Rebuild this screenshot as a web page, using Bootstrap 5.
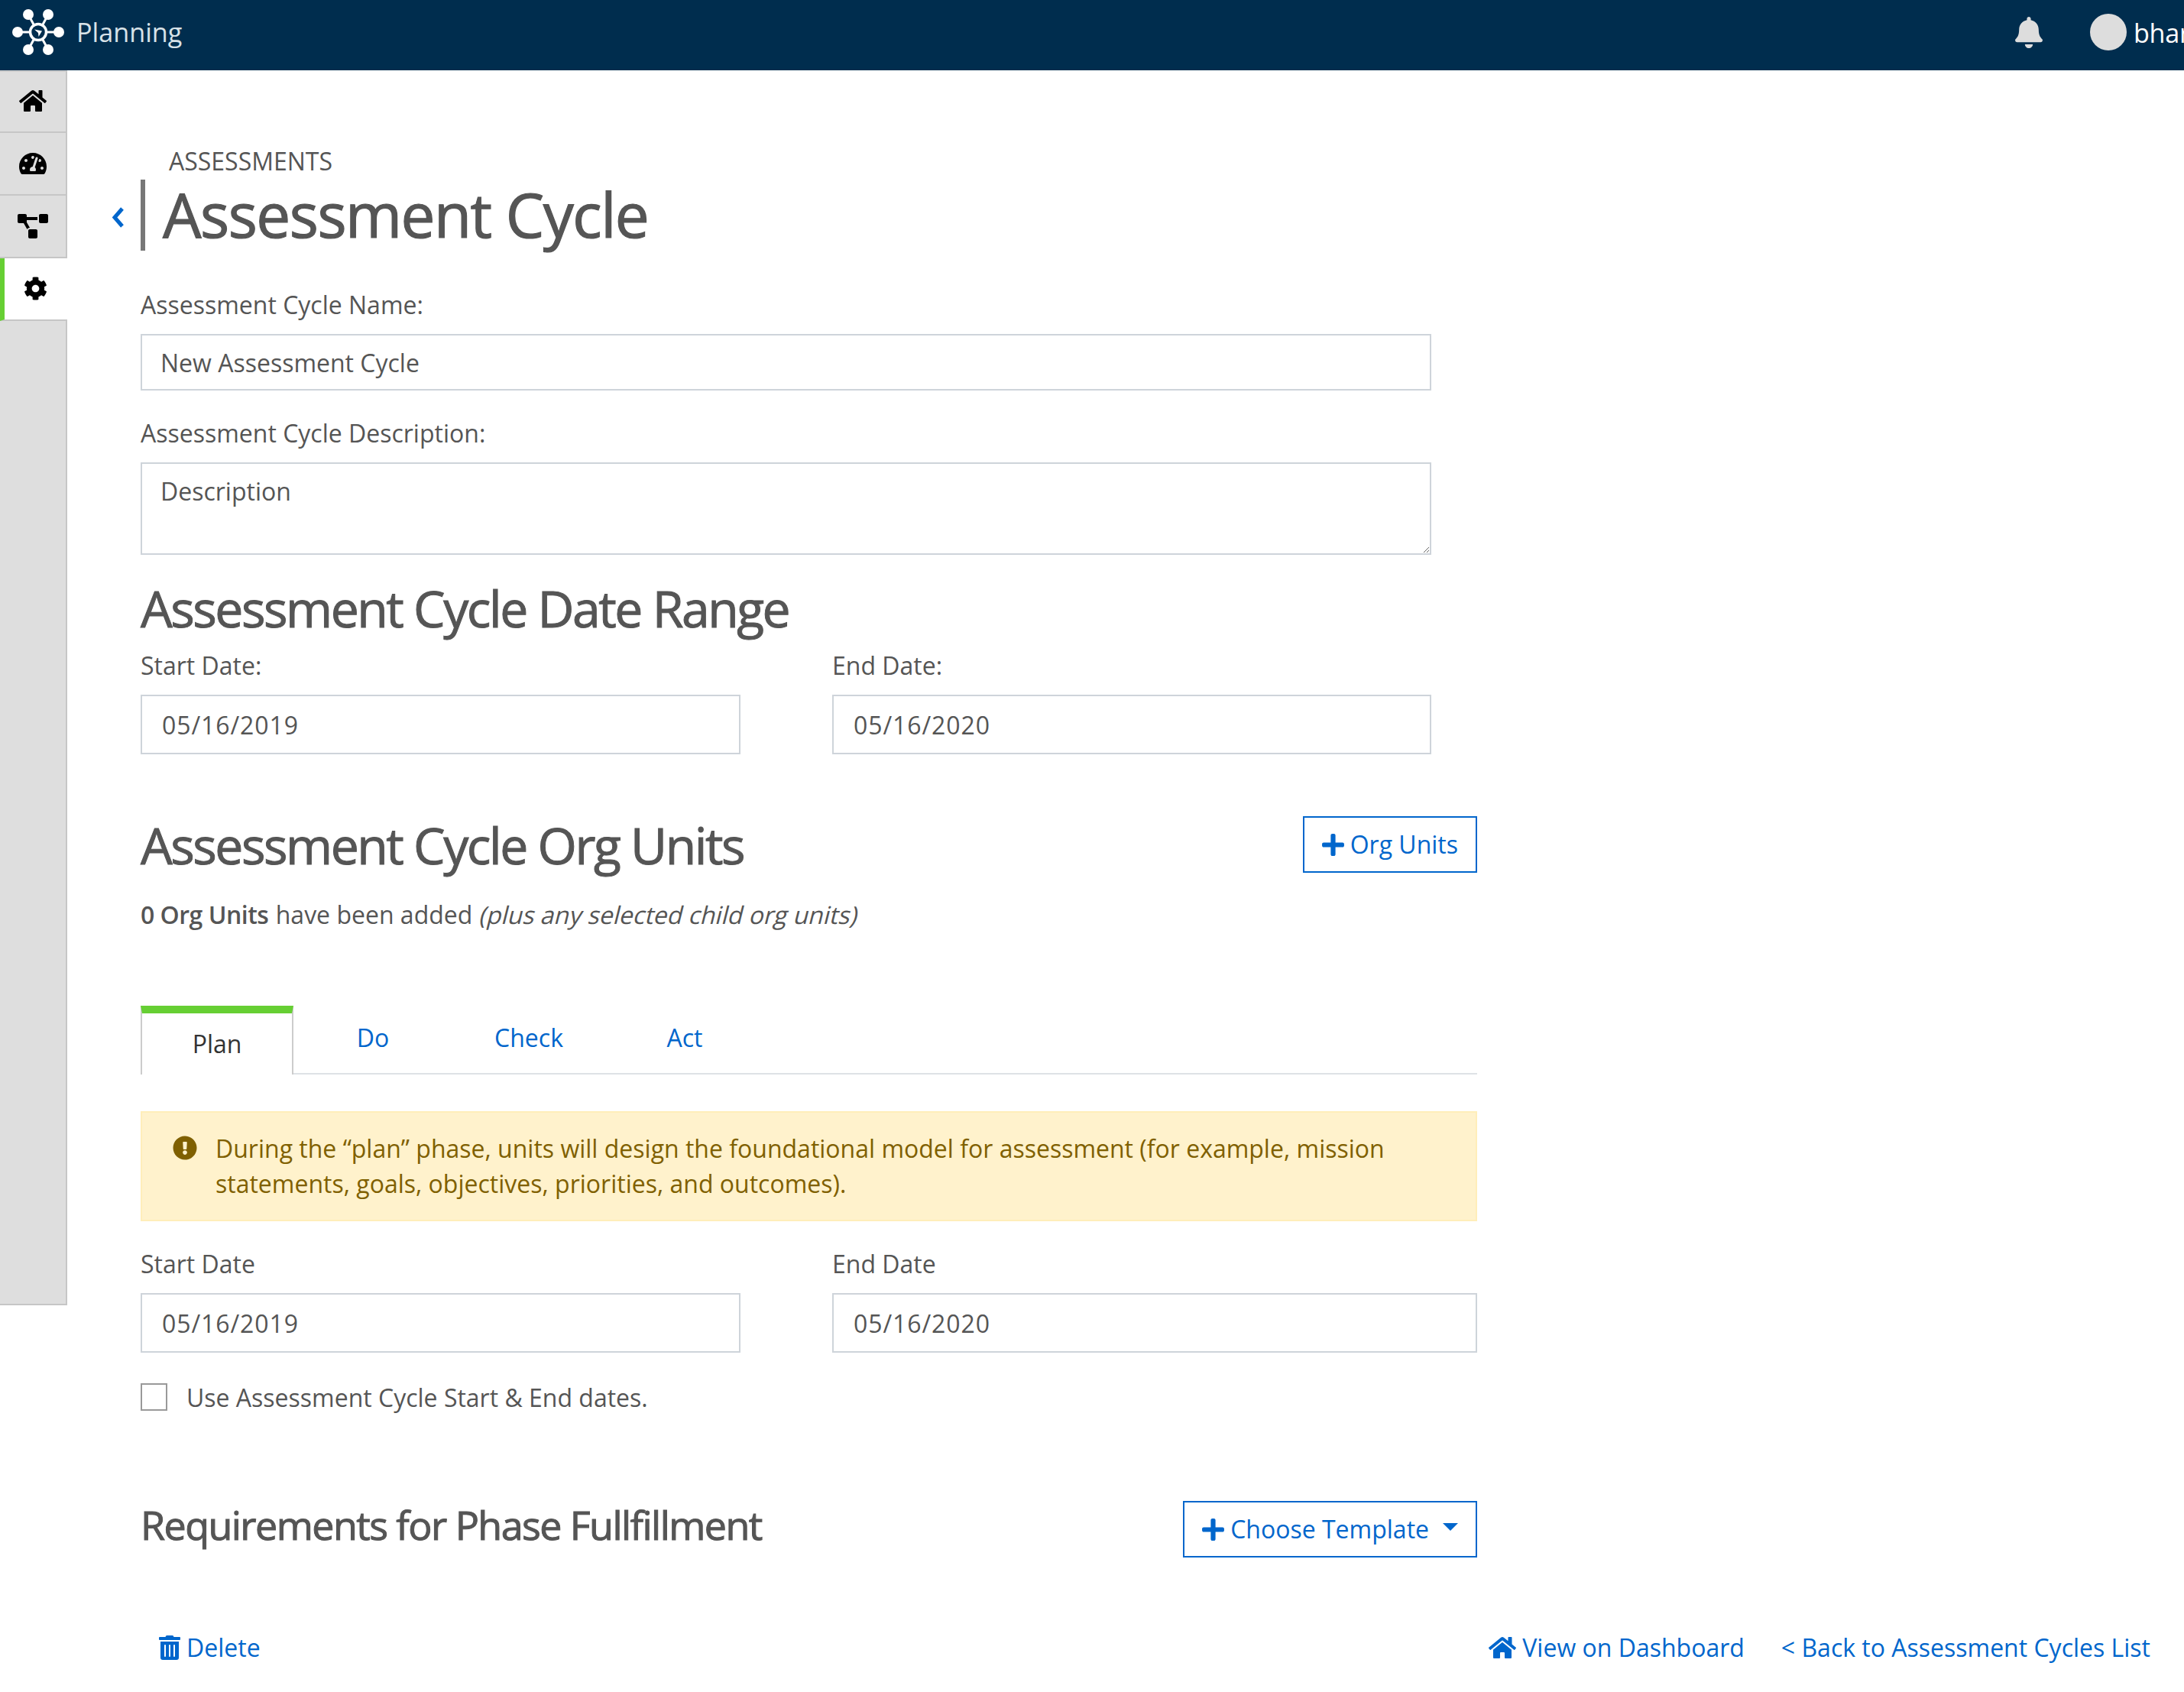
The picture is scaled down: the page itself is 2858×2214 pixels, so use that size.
<!DOCTYPE html>
<html lang="en">
<head>
<meta charset="utf-8">
<title>Assessment Cycle</title>
<link rel="stylesheet" href="https://cdn.jsdelivr.net/npm/bootstrap@5.3.0/dist/css/bootstrap.min.css">
<style>
html, body { height: 100%; overflow: hidden; }
body { font-family: "Open Sans", "Noto Sans", sans-serif; font-size: 32px; color: #555; background: #fff; line-height: 46px; }
svg { fill: currentColor; display: block; flex: none; }
.appbar { height: 92px; background: #002d4e; padding: 0; flex-wrap: nowrap; justify-content: flex-start; overflow: hidden; }
.appbar-logo { width: 72px; height: 72px; margin-left: 14px; margin-right: 14px; margin-top: -8px; }
.appbar-title { color: #d8e2e8; font-size: 34.2px; line-height: 46px; margin-top: -8px; }
.appbar-bell { width: 36px; height: 41px; color: #ddd; margin-left: auto; margin-top: -8px; }
.appbar-avatar { width: 48px; height: 48px; background: #ddd; border-radius: 50%; margin-left: 62px; margin-top: -8px; flex: none; }
.appbar-user { color: #fff; font-size: 34.2px; margin-left: 9px; width: 66px; overflow: hidden; flex: none; margin-top: -6px; white-space: nowrap; letter-spacing: -.3px; }
.rail { width: 88px; height: 1616px; flex: none; background: #dedede; border-right: 2px solid #c6c6c6; border-bottom: 2px solid #c6c6c6; border-top: 2px solid #ccc; }
.rail-item { height: 82px; display: flex; align-items: center; justify-content: center; color: #000; border-bottom: 2px solid #c6c6c6; }
.rail-item:first-child { height: 80px; }
.rail-item.is-on { background: #fff; margin-right: -2px; border-left: 6px solid #66cf33; padding-right: 2px; }
.rail-home svg, .rail-gauge svg { width: 36px; height: 32px; }
.rail-home svg { margin-top: -2px; }
.rail-flow svg { width: 40px; height: 32px; }
.rail-item.is-on svg { width: 31px; height: 31px; margin-top: -1px; }
.pane { width: 1749px; margin-left: 96px; flex: none; padding-top: 97px; }
.form-col { width: 1689px; }
.crumb { font-size: 32px; line-height: 44px; margin-left: 37px; height: 46px; }
.title-row { margin-left: -38px; height: 93px; }
.back-chev { width: 38px; color: #0066cc; }
.back-chev svg { width: 17px; height: 29px; fill: none; stroke: currentColor; stroke-width: 5; margin-top: 6px; }
.title-h { border-left: 6px solid #777; height: 93px; padding-left: 23px; margin: 0; font-size: 80px; font-weight: 400; line-height: 90px; letter-spacing: -1.5px; color: #555; white-space: nowrap; -webkit-text-stroke: 1.2px #555; }
.fld-label { font-size: 32px; line-height: 46px; margin: 0 0 15px; color: #555; display: block; }
.form-control.fld { border: 2px solid #ced4da; border-radius: 0; font-size: 32px; color: #555; padding: 0 24px; height: 74px; box-shadow: none; }
.form-control.fld.tall { height: 78px; padding-left: 26px; letter-spacing: .9px; }
textarea.form-control.fld { height: 121px; padding: 13px 24px; line-height: 46px; }
.sec-h { font-size: 66px; font-weight: 400; letter-spacing: -2.44px; line-height: 80px; margin: 0; color: #555; white-space: nowrap; -webkit-text-stroke: 1px #555; }
.sec-h.sm { font-size: 52px; letter-spacing: -1.56px; padding-bottom: 12px; }
.gap-col { column-gap: 120px; }
.gap-col > div:first-child { flex: 0 0 785px; }
.gap-col > div:last-child { flex: 1 1 0; min-width: 0; }
.btn.act-btn { border: 2px solid #0066cc; color: #0066cc; background: #fff; border-radius: 0; font-size: 32px; line-height: 46px; padding: 0 23px; height: 74px; display: flex; align-items: center; gap: 8px; }
.act-btn svg { width: 29px; height: 33px; }
.dropdown-toggle.act-btn::after { margin-left: 10px; border-top-width: 10px; border-left-width: 10px; border-right-width: 10px; margin-top: -6px; }
.tab-strip { border-bottom: 2px solid #dee2e6; height: 90px; flex-wrap: nowrap; }
.tab-strip .nav-link { border: 0; border-radius: 0; color: #0066cc; font-size: 32px; padding: 0; width: 204px; text-align: center; height: 84px; line-height: 84px; background: none; }
.tab-strip .nav-item:nth-child(2) { margin-left: 2px; }
.tab-strip .nav-link.active { width: 200px; height: 90px; margin-right: 0; color: #333; background: #fff; border-top: 10px solid #66cf33; border-left: 2px solid #ccc; border-right: 2px solid #ccc; line-height: 80px; }
.note { background: #fff2cc; border: 2px solid #ffeeba; border-radius: 0; color: #7f6000; font-size: 32px; line-height: 46px; padding: 24px 38px 24px 40px; margin: 0; display: flex; gap: 24px; height: 144px; }
.note svg { width: 32px; height: 32px; margin-top: 6px; }
.form-check-input.box { width: 35px; height: 36px; border: 2px solid #999; border-radius: 0; margin: -3px 0 0; flex: none; }
.chk-label { margin-left: 25px; }
.a-link { color: #0066cc; text-decoration: none; display: inline-flex; align-items: center; gap: 8px; white-space: nowrap; }
.a-link svg { height: 32px; }
.org-b { font-weight: 600; letter-spacing: -.5px; margin-right: 1px; }
.fake-oblique { display: inline-block; font-style: normal; transform: skewX(-14deg); margin-left: 2px; }
.bottom-row { width: 2630px; }
</style>
</head>
<body>
<nav class="navbar appbar">
  <svg class="appbar-logo" viewBox="0 0 72 72" aria-hidden="true">
    <g stroke="#fff" stroke-width="3" fill="none">
      <circle cx="36" cy="36" r="10.5" stroke-width="3.5"/>
      <path d="M9 36H25M47 36H63M23 13L30 26M49 13L42 26M23 59L30 46M49 59L42 46"/>
    </g>
    <g fill="#fff">
      <circle cx="9" cy="36" r="7"/><circle cx="63" cy="36" r="7"/>
      <circle cx="23" cy="13" r="7"/><circle cx="49" cy="13" r="7"/>
      <circle cx="23" cy="59" r="7"/><circle cx="49" cy="59" r="7"/>
      <path d="M31 32.5L41 34.5L36.5 42L36 37Z"/>
    </g>
  </svg>
  <span class="appbar-title">Planning</span>
  <svg class="appbar-bell" viewBox="0 0 448 512" aria-hidden="true"><path d="M224 512c35.32 0 63.97-28.65 63.97-64H160.03c0 35.35 28.65 64 63.97 64zm215.39-149.71c-19.32-20.76-55.47-51.99-55.47-154.29 0-77.7-54.48-139.9-127.94-155.16V32c0-17.67-14.32-32-31.98-32s-31.98 14.33-31.98 32v20.84C118.56 68.1 64.08 130.3 64.08 208c0 102.3-36.15 133.53-55.47 154.29-6 6.45-8.66 14.16-8.61 21.71.11 16.4 12.98 32 32.1 32h383.8c19.12 0 32-15.6 32.1-32 .05-7.55-2.61-15.27-8.61-21.71z"/></svg>
  <span class="appbar-avatar"></span>
  <span class="appbar-user">bharat</span>
</nav>
<div class="d-flex">
  <aside class="rail">
    <div class="rail-item rail-home"><svg viewBox="0 0 576 512" aria-hidden="true"><path d="M280.37 148.26L96 300.11V464a16 16 0 0 0 16 16l112.06-.29a16 16 0 0 0 15.92-16V368a16 16 0 0 1 16-16h64a16 16 0 0 1 16 16v95.64a16 16 0 0 0 16 16.05L464 480a16 16 0 0 0 16-16V300L295.67 148.26a12.19 12.19 0 0 0-15.3 0zM571.6 251.47L488 182.56V44.05a12 12 0 0 0-12-12h-56a12 12 0 0 0-12 12v72.61L318.47 43a48 48 0 0 0-61 0L4.34 251.47a12 12 0 0 0-1.6 16.9l25.5 31A12 12 0 0 0 45.15 301l235.22-193.74a12.19 12.19 0 0 1 15.3 0L530.9 301a12 12 0 0 0 16.9-1.6l25.5-31a12 12 0 0 0-1.7-16.93z"/></svg></div>
    <div class="rail-item rail-gauge"><svg viewBox="0 0 576 512" aria-hidden="true"><path d="M288 32C128.94 32 0 160.94 0 320c0 52.8 14.25 102.26 39.06 144.8 5.61 9.62 16.3 15.2 27.44 15.2h443c11.14 0 21.83-5.58 27.44-15.2C561.75 422.26 576 372.8 576 320c0-159.06-128.94-288-288-288zm0 64c14.71 0 26.58 10.13 30.32 23.65-1.11 2.26-2.64 4.23-3.45 6.67l-9.22 27.67c-5.13 3.49-10.97 6.01-17.64 6.01-17.67 0-32-14.33-32-32S270.33 96 288 96zM96 384c-17.67 0-32-14.33-32-32s14.33-32 32-32 32 14.33 32 32-14.33 32-32 32zm48-160c-17.67 0-32-14.33-32-32s14.33-32 32-32 32 14.33 32 32-14.33 32-32 32zm246.77-72.41l-61.33 184C343.13 347.33 352 364.54 352 384c0 11.72-3.38 22.55-8.88 32H232.88c-5.5-9.45-8.88-20.28-8.88-32 0-33.94 26.5-61.43 59.9-63.59l61.34-184.01c4.17-12.56 17.73-19.45 30.36-15.17 12.57 4.19 19.35 17.79 15.17 30.36zm14.66 57.2l15.52-46.55c3.47-1.29 7.13-2.23 11.05-2.23 17.67 0 32 14.33 32 32s-14.33 32-32 32c-11.38-.01-20.89-6.28-26.57-15.22zM480 384c-17.67 0-32-14.33-32-32s14.33-32 32-32 32 14.33 32 32-14.33 32-32 32z"/></svg></div>
    <div class="rail-item rail-flow"><svg viewBox="0 0 640 512" aria-hidden="true"><path d="M384 320H256c-17.67 0-32 14.33-32 32v128c0 17.67 14.33 32 32 32h128c17.67 0 32-14.33 32-32V352c0-17.67-14.33-32-32-32zM192 32c0-17.67-14.33-32-32-32H32C14.33 0 0 14.33 0 32v128c0 17.67 14.33 32 32 32h95.72l73.16 128.04C211.98 300.98 232.4 288 256 288h.28L192 175.51V128h224V64H192V32zM608 0H480c-17.67 0-32 14.33-32 32v128c0 17.67 14.33 32 32 32h128c17.67 0 32-14.33 32-32V32c0-17.67-14.33-32-32-32z"/></svg></div>
    <div class="rail-item is-on"><svg viewBox="0 0 512 512" aria-hidden="true"><path d="M487.4 315.7l-42.6-24.6c4.3-23.2 4.3-47 0-70.2l42.6-24.6c4.9-2.8 7.1-8.6 5.5-14-11.1-35.6-30-67.8-54.7-94.6-3.8-4.1-10-5.1-14.8-2.3L380.8 110c-17.9-15.4-38.5-27.3-60.8-35.1V25.8c0-5.6-3.9-10.5-9.4-11.7-36.7-8.2-74.3-7.8-109.2 0-5.5 1.2-9.4 6.1-9.4 11.7V75c-22.2 7.9-42.8 19.8-60.8 35.1L88.7 85.5c-4.9-2.8-11-1.9-14.8 2.3-24.7 26.7-43.6 58.9-54.7 94.6-1.7 5.4.6 11.2 5.5 14L67.3 221c-4.3 23.2-4.3 47 0 70.2l-42.6 24.6c-4.9 2.8-7.1 8.6-5.5 14 11.1 35.6 30 67.8 54.7 94.6 3.8 4.1 10 5.1 14.8 2.3l42.6-24.6c17.9 15.4 38.5 27.3 60.8 35.1v49.2c0 5.6 3.9 10.5 9.4 11.7 36.7 8.2 74.3 7.8 109.2 0 5.5-1.2 9.4-6.1 9.4-11.7v-49.2c22.2-7.9 42.8-19.8 60.8-35.1l42.6 24.6c4.9 2.8 11 1.9 14.8-2.3 24.7-26.7 43.6-58.9 54.7-94.6 1.5-5.5-.7-11.3-5.6-14.1zM256 336c-44.1 0-80-35.9-80-80s35.9-80 80-80 80 35.9 80 80-35.9 80-80 80z"/></svg></div>
  </aside>
  <main class="pane">
    <div class="crumb">ASSESSMENTS</div>
    <div class="d-flex align-items-center title-row">
      <span class="back-chev"><svg viewBox="0 0 17 29" aria-hidden="true"><path d="M14 3L4 14.5L14 26"/></svg></span>
      <h1 class="title-h">Assessment Cycle</h1>
    </div>
    <div class="form-col">
      <label class="fld-label" style="margin-top:48px">Assessment Cycle Name:</label>
      <input class="form-control fld" type="text" value="New Assessment Cycle">
      <label class="fld-label" style="margin-top:33px">Assessment Cycle Description:</label>
      <textarea class="form-control fld" placeholder="Description">Description</textarea>
      <h2 class="sec-h" style="margin-top:29px">Assessment Cycle Date Range</h2>
      <div class="d-flex gap-col" style="margin-top:13px">
        <div><label class="fld-label">Start Date:</label><input class="form-control fld tall" value="05/16/2019"></div>
        <div><label class="fld-label">End Date:</label><input class="form-control fld tall" value="05/16/2020"></div>
      </div>
    </div>
    <div class="d-flex justify-content-between align-items-center" style="margin-top:81px;height:74px">
      <h2 class="sec-h">Assessment Cycle Org Units</h2>
      <button class="btn act-btn" type="button"><svg viewBox="0 0 448 512" aria-hidden="true"><path d="M416 208H272V64c0-17.67-14.33-32-32-32h-32c-17.67 0-32 14.33-32 32v144H32c-17.67 0-32 14.33-32 32v32c0 17.67 14.33 32 32 32h144v144c0 17.67 14.33 32 32 32h32c17.67 0 32-14.33 32-32V304h144c17.67 0 32-14.33 32-32v-32c0-17.67-14.33-32-32-32z"/></svg>Org Units</button>
    </div>
    <p style="margin:32px 0 0"><span class="org-b">0 Org Units</span> have been added <em class="fake-oblique">(plus any selected child org units)</em></p>
    <ul class="nav nav-tabs tab-strip" style="margin-top:96px">
      <li class="nav-item"><a class="nav-link active" href="#">Plan</a></li>
      <li class="nav-item"><a class="nav-link" href="#">Do</a></li>
      <li class="nav-item"><a class="nav-link" href="#">Check</a></li>
      <li class="nav-item"><a class="nav-link" href="#">Act</a></li>
    </ul>
    <div class="alert note" style="margin-top:48px" role="alert">
      <svg viewBox="0 0 512 512" aria-hidden="true"><path d="M504 256c0 136.997-111.043 248-248 248S8 392.997 8 256C8 119.083 119.043 8 256 8s248 111.083 248 248zm-248 50c-25.405 0-46 20.595-46 46s20.595 46 46 46 46-20.595 46-46-20.595-46-46-46zm-43.673-165.346l7.418 136c.347 6.364 5.609 11.346 11.982 11.346h48.546c6.373 0 11.635-4.982 11.982-11.346l7.418-136c.375-6.874-5.098-12.654-11.982-12.654h-63.383c-6.884 0-12.356 5.78-11.981 12.654z"/></svg>
      <div>During the “plan” phase, units will design the foundational model for assessment (for example, mission statements, goals, objectives, priorities, and outcomes).</div>
    </div>
    <div class="d-flex gap-col" style="margin-top:33px">
      <div><label class="fld-label">Start Date</label><input class="form-control fld tall" value="05/16/2019"></div>
      <div><label class="fld-label">End Date</label><input class="form-control fld tall" value="05/16/2020"></div>
    </div>
    <div class="d-flex align-items-center" style="margin-top:36px;height:46px">
      <input class="form-check-input box" type="checkbox"><span class="chk-label">Use Assessment Cycle Start &amp; End dates.</span>
    </div>
    <div class="d-flex justify-content-between align-items-center" style="margin-top:112px;height:74px">
      <h3 class="sec-h sm">Requirements for Phase Fullfillment</h3>
      <button class="btn act-btn dropdown-toggle" type="button"><svg viewBox="0 0 448 512" aria-hidden="true"><path d="M416 208H272V64c0-17.67-14.33-32-32-32h-32c-17.67 0-32 14.33-32 32v144H32c-17.67 0-32 14.33-32 32v32c0 17.67 14.33 32 32 32h144v144c0 17.67 14.33 32 32 32h32c17.67 0 32-14.33 32-32V304h144c17.67 0 32-14.33 32-32v-32c0-17.67-14.33-32-32-32z"/></svg>Choose Template</button>
    </div>
    <div class="d-flex align-items-center bottom-row" style="margin-top:95px;height:46px;padding-left:24px">
      <a class="a-link" href="#"><svg viewBox="0 0 448 512" width="28" aria-hidden="true"><path d="M32 464a48 48 0 0 0 48 48h288a48 48 0 0 0 48-48V128H32zm272-256a16 16 0 0 1 32 0v224a16 16 0 0 1-32 0zm-96 0a16 16 0 0 1 32 0v224a16 16 0 0 1-32 0zm-96 0a16 16 0 0 1 32 0v224a16 16 0 0 1-32 0zM432 32H312l-9.4-18.7A24 24 0 0 0 281.1 0H166.8a23.72 23.72 0 0 0-21.4 13.3L136 32H16A16 16 0 0 0 0 48v32a16 16 0 0 0 16 16h416a16 16 0 0 0 16-16V48a16 16 0 0 0-16-16z"/></svg>Delete</a>
      <a class="a-link ms-auto" href="#"><svg viewBox="0 0 576 512" width="36" aria-hidden="true"><path d="M280.37 148.26L96 300.11V464a16 16 0 0 0 16 16l112.06-.29a16 16 0 0 0 15.92-16V368a16 16 0 0 1 16-16h64a16 16 0 0 1 16 16v95.64a16 16 0 0 0 16 16.05L464 480a16 16 0 0 0 16-16V300L295.67 148.26a12.19 12.19 0 0 0-15.3 0zM571.6 251.47L488 182.56V44.05a12 12 0 0 0-12-12h-56a12 12 0 0 0-12 12v72.61L318.47 43a48 48 0 0 0-61 0L4.34 251.47a12 12 0 0 0-1.6 16.9l25.5 31A12 12 0 0 0 45.15 301l235.22-193.74a12.19 12.19 0 0 1 15.3 0L530.9 301a12 12 0 0 0 16.9-1.6l25.5-31a12 12 0 0 0-1.7-16.93z"/></svg>View on Dashboard</a>
      <a class="a-link" href="#" style="margin-left:48px">&lt; Back to Assessment Cycles List</a>
    </div>
  </main>
</div>
<script src="https://cdn.jsdelivr.net/npm/bootstrap@5.3.0/dist/js/bootstrap.bundle.min.js"></script>
</body>
</html>
